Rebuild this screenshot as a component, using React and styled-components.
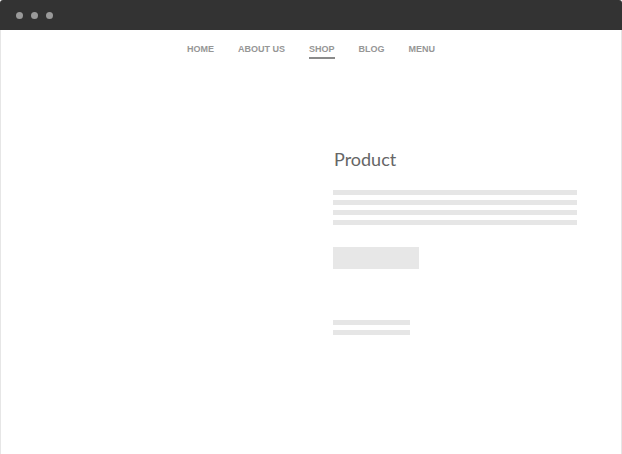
import React from 'react';
import styled, { createGlobalStyle } from 'styled-components';

const Global = createGlobalStyle`
  html, body {
    margin: 0;
    padding: 0;
    background: #fff;
  }
`;

const Window = styled.div`
  width: 622px;
  height: 454px;
  display: flex;
  flex-direction: column;
  box-sizing: border-box;
  overflow: hidden;
`;

const TitleBar = styled.div`
  height: 30px;
  flex: none;
  background: #333333;
  border-radius: 3px 3px 0 0;
  display: flex;
  align-items: center;
  gap: 8px;
  padding-left: 16px;
  box-sizing: border-box;
`;

const Dot = styled.span`
  width: 7px;
  height: 7px;
  border-radius: 50%;
  background: #9a9a9a;
`;

const Page = styled.div`
  flex: 1;
  border-left: 1px solid #e6e6e6;
  border-right: 1px solid #e6e6e6;
  display: flex;
  flex-direction: column;
`;

const Nav = styled.nav`
  display: flex;
  justify-content: center;
  gap: 24px;
  padding-top: 14px;
`;

const NavItem = styled.a`
  font-family: "Liberation Sans", Arial, sans-serif;
  font-size: 9px;
  font-weight: bold;
  line-height: 11px;
  color: #969696;
  text-decoration: none;
  padding-bottom: 2px;
  border-bottom: 2px solid ${(p) => (p.active ? '#8a8a8a' : 'transparent')};
`;

const Body = styled.div`
  display: flex;
  padding-top: 89px;
  padding-right: 44px;
`;

const ImageArea = styled.div`
  flex: 1;
`;

const Details = styled.div`
  width: 244px;
  display: flex;
  flex-direction: column;
`;

const Title = styled.h1`
  margin: 0 0 0 1px;
  font-family: "Lato", "Open Sans", sans-serif;
  font-weight: 400;
  font-size: 18px;
  line-height: 22px;
  color: #666666;
`;

const Lines = styled.div`
  display: flex;
  flex-direction: column;
  gap: 5px;
  width: ${(p) => p.width}px;
  margin-top: ${(p) => p.top}px;
`;

const Line = styled.div`
  height: 5px;
  background: #e6e6e6;
`;

const Button = styled.div`
  width: 86px;
  height: 22px;
  margin-top: 22px;
  background: #e7e7e7;
`;

export default () => (
  <Window>
    <Global />

    <TitleBar>
      <Dot />
      <Dot />
      <Dot />
    </TitleBar>

    <Page>
      <Nav>
        <NavItem>HOME</NavItem>
        <NavItem>ABOUT US</NavItem>
        <NavItem active>SHOP</NavItem>
        <NavItem>BLOG</NavItem>
        <NavItem>MENU</NavItem>
      </Nav>

      <Body>
        <ImageArea />

        <Details>
          <Title>Product</Title>

          <Lines width={244} top={20}>
            <Line />
            <Line />
            <Line />
            <Line />
          </Lines>

          <Button />

          <Lines width={77} top={51}>
            <Line />
            <Line />
          </Lines>
        </Details>
      </Body>
    </Page>
  </Window>
);
